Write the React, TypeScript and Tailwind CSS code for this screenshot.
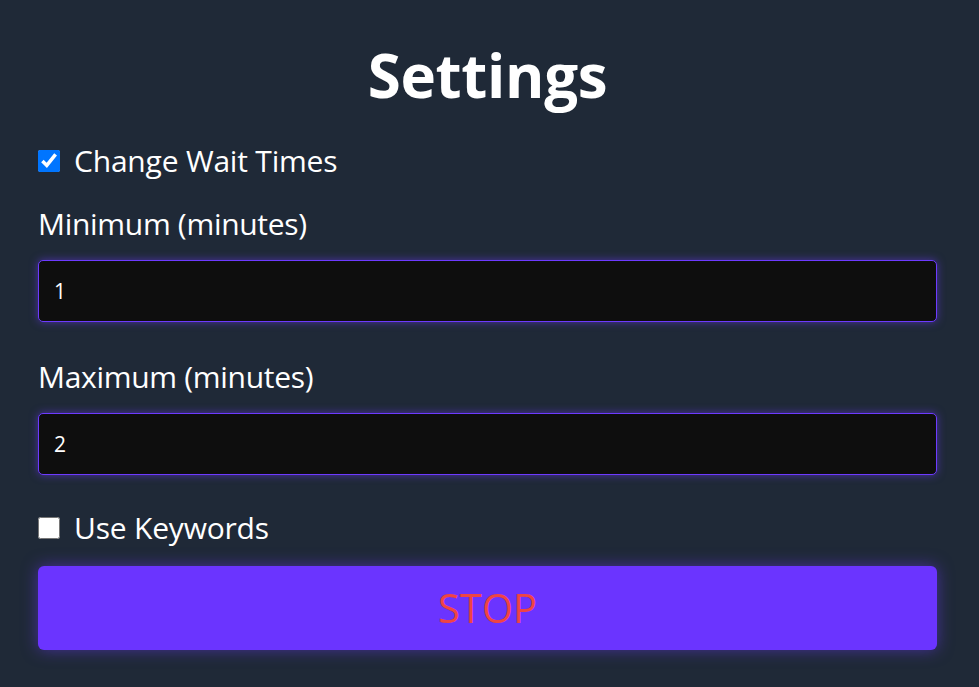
import React, { useState } from "react";

export default function App() {
  const [wait, setWait] = useState(true);
  const [kw, setKw] = useState(false);
  return (
    <div
      className="min-h-[687px] w-full bg-[#1f2937] text-white pl-[38px] pr-[42px]"
      style={{ fontFamily: '"Open Sans", "Noto Sans", sans-serif' }}
    >
      <h1 className="pt-[40px] text-center text-[60px] font-bold leading-[70px] tracking-[-0.3px]">Settings</h1>
      <label className="mt-[31px] flex h-[40px] items-center gap-[14px] text-[30px] leading-none">
        <input
          type="checkbox"
          checked={wait}
          onChange={(e) => setWait(e.target.checked)}
          className="m-0 h-[22px] w-[22px] accent-[#0075ff]"
        />
        <span className="tracking-[-0.2px]">Change Wait Times</span>
      </label>
      <div className="mt-[23px] text-[30px] leading-[40px] tracking-[-0.3px]">Minimum (minutes)</div>
      <input
        defaultValue="1"
        className="mt-[16px] block h-[62px] w-full rounded-[5px] border border-[#6d3aff] bg-[#0e0e0e] px-[15px] text-[21px] text-white shadow-[0_0_8px_rgba(109,58,255,0.55)] outline-none"
      />
      <div className="mt-[35px] text-[30px] leading-[40px] tracking-[-0.3px]">Maximum (minutes)</div>
      <input
        defaultValue="2"
        className="mt-[16px] block h-[62px] w-full rounded-[5px] border border-[#6d3aff] bg-[#0e0e0e] px-[15px] text-[21px] text-white shadow-[0_0_8px_rgba(109,58,255,0.55)] outline-none"
      />
      <label className="mt-[33px] flex h-[40px] items-center gap-[14px] text-[30px] leading-none">
        <input
          type="checkbox"
          checked={kw}
          onChange={(e) => setKw(e.target.checked)}
          className="m-0 h-[22px] w-[22px] accent-[#0075ff]"
        />
        <span className="tracking-[-0.2px]">Use Keywords</span>
      </label>
      <button className="mt-[18px] block h-[84px] w-full rounded-[6px] bg-[#6b34ff] text-[40px] text-[#ef4444] shadow-[0_0_16px_rgba(109,58,255,0.5)]">
        STOP
      </button>
    </div>
  );
}
